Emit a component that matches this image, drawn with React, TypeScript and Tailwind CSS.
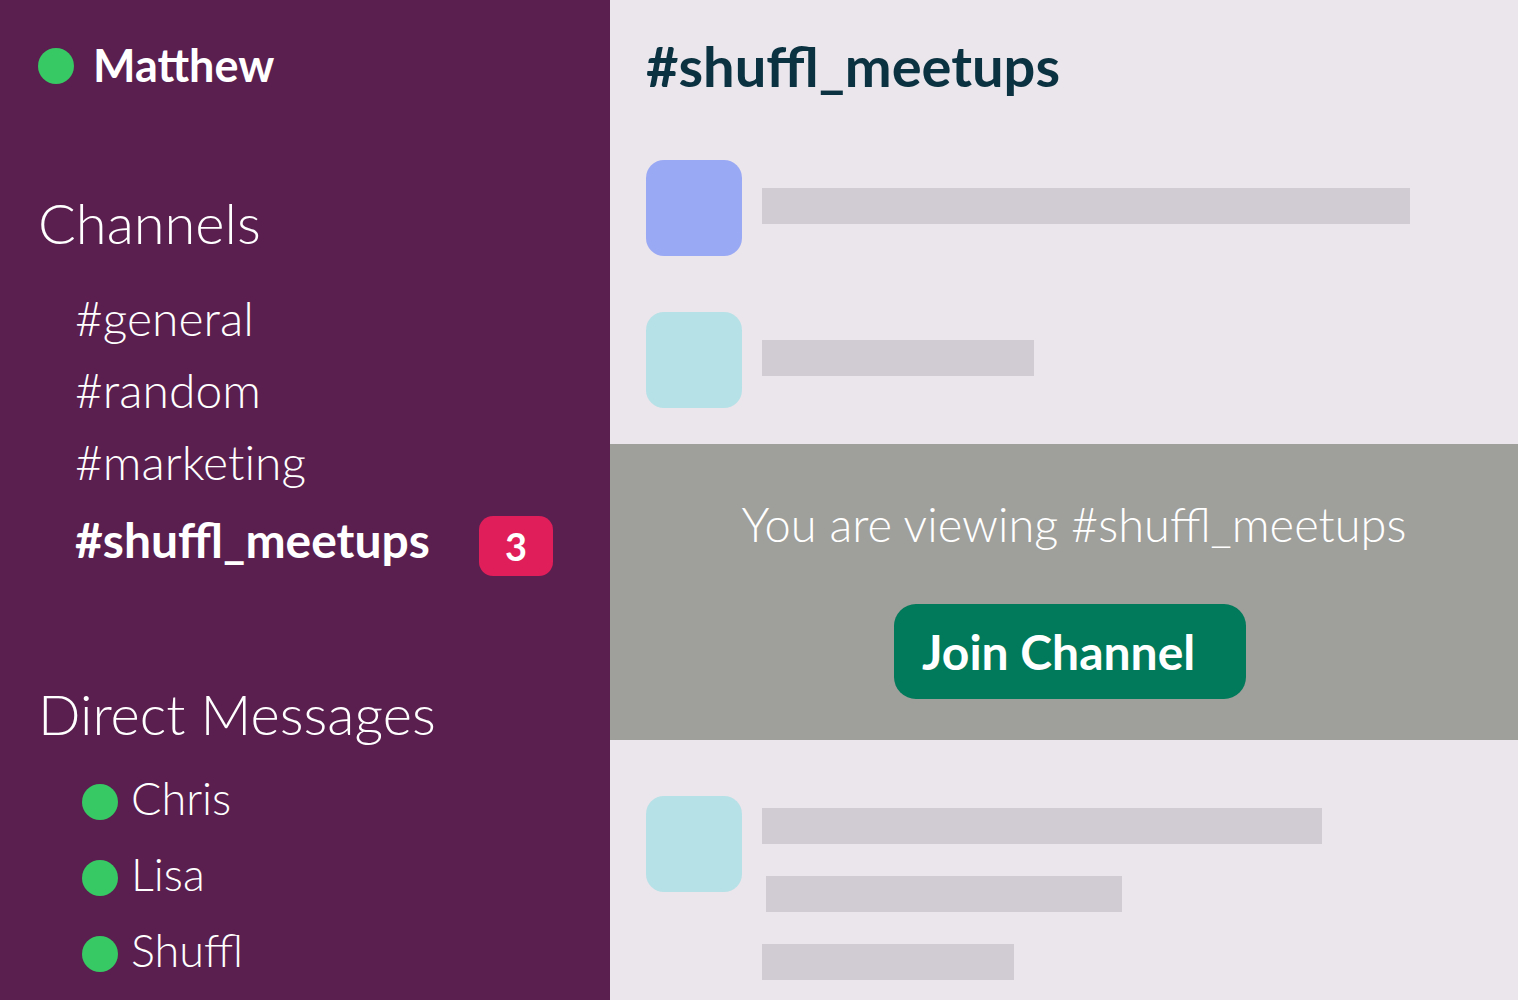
import React from "react";

const font = { fontFamily: "Lato, 'Open Sans', sans-serif" };

function Bar({ w, className = "" }: { w: string; className?: string }) {
  return <div className={`h-[36px] bg-[#d1ccd3] ${w} ${className}`} />;
}

export default function App() {
  return (
    <div style={font} className="flex w-[1518px] h-[1000px] overflow-hidden">
      {/* Sidebar */}
      <aside className="w-[610px] shrink-0 bg-[#5a1f4f] text-white flex flex-col pr-[57px]">
        <div className="flex items-center h-[45px] mt-[43px] pl-[38px] gap-[19px]">
          <span className="w-[36px] h-[36px] rounded-full bg-[#37c963]" />
          <span className="text-[45px] leading-none font-bold">Matthew</span>
        </div>

        <h2 className="mt-[107px] pl-[38px] text-[56px] leading-none font-light">Channels</h2>

        <ul className="mt-[43px] pl-[75px] flex flex-col gap-[24px] text-[48px] leading-none font-light">
          <li className="h-[48px]">#general</li>
          <li className="h-[48px]">#random</li>
          <li className="h-[48px]">{"#market\u200Cing"}</li>
        </ul>

        <div className="mt-[30px] pl-[75px] flex items-start h-[60px]">
          <span className="text-[48px] leading-none font-bold">#shuffl_meetups</span>
          <span className="ml-auto w-[74px] h-[60px] rounded-[14px] bg-[#e01e5a] flex items-center justify-center text-[38px] font-bold leading-none">
            3
          </span>
        </div>

        <h2 className="mt-[110px] pl-[38px] text-[56px] leading-none font-light">Direct Messages</h2>

        <ul className="mt-[34px] pl-[82px] flex flex-col gap-[25px] text-[45px] leading-none font-light">
          {["Chris", "Lisa", "Shuffl"].map((n) => (
            <li key={n} className="flex items-center h-[51px] gap-[13px]">
              <span className="w-[36px] h-[36px] rounded-full bg-[#37c963] shrink-0" />
              <span className="pb-[6px]">{n}</span>
            </li>
          ))}
        </ul>
      </aside>

      {/* Main */}
      <main className="flex-1 bg-[#ebe6ec] flex flex-col">
        <h1 className="mt-[38px] pl-[36px] text-[56px] leading-none font-bold text-[#0b3240]">#shuffl_meetups</h1>

        <div className="mt-[66px] pl-[36px] flex items-start gap-[20px]">
          <div className="w-[96px] h-[96px] rounded-[18px] bg-[#9aa9f4] shrink-0" />
          <Bar w="w-[648px]" className="mt-[28px]" />
        </div>

        <div className="mt-[56px] pl-[36px] flex items-start gap-[20px]">
          <div className="w-[96px] h-[96px] rounded-[18px] bg-[#b6e1e7] shrink-0" />
          <Bar w="w-[272px]" className="mt-[28px]" />
        </div>

        <section className="mt-[36px] h-[296px] bg-[#9f9f9c] flex flex-col items-center pl-[12px]">
          <p className="mt-[57px] ml-[8px] text-[47px] leading-none font-light text-white">You are viewing #shuffl_meetups</p>
          <button className="mt-[56px] w-[352px] h-[95px] rounded-[22px] bg-[#007a5a] flex items-center px-[28px] text-white text-[48px] font-bold leading-none">
            Join Channel
          </button>
        </section>

        <div className="mt-[56px] pl-[36px] flex items-start gap-[20px]">
          <div className="w-[96px] h-[96px] rounded-[18px] bg-[#b6e1e7] shrink-0" />
          <div className="mt-[12px] flex flex-col gap-[32px]">
            <Bar w="w-[560px]" />
            <Bar w="w-[356px]" className="ml-[4px]" />
            <Bar w="w-[252px]" />
          </div>
        </div>
      </main>
    </div>
  );
}
